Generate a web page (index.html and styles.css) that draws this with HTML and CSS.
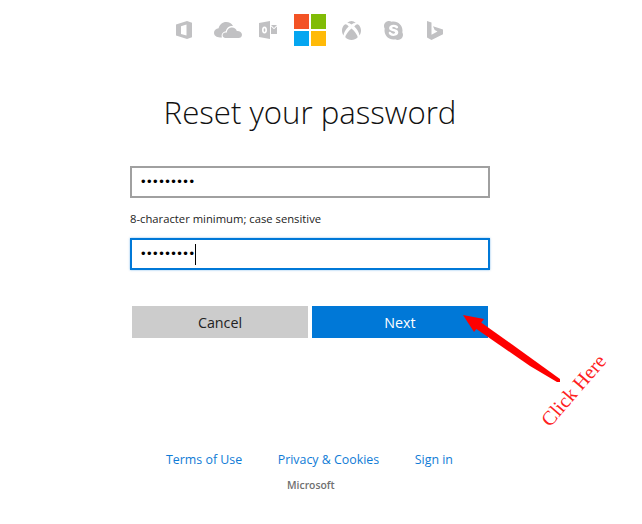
FILE: index.html
```html
<!DOCTYPE html>
<html lang="en">
<head>
  <meta charset="UTF-8">
  <title>Reset your password</title>
  <link rel="stylesheet" href="styles.css">
</head>
<body>

  <div class="brand-bar">
    <svg class="icon" width="16" height="18" viewBox="0 0 16 18"><path fill-rule="evenodd" d="M0 3.500 11 0l5 1.800v14.400L11 18 0 14.500zM5 5.200 10.500 3.600v10.800L5 13z"/></svg>
    <svg class="icon" width="28" height="16" viewBox="0 0 28 16"><path d="M6 15.500C2.500 15.500 0 13.500 0 10.800 0 8.300 2 6.500 4.600 6.300 5.400 2.600 8.500 0 12.200 0c3 0 5.500 1.600 6.800 4-1-.2-2-.1-3 .3-2.400.8-3.800 2.800-4.200 5-2.300.2-4.200 2.100-4.200 4.300 0 .7.100 1.300.4 1.900z"/><path d="M11 16c-1.500-.3-2.400-1.400-2.400-2.700 0-1.600 1.400-2.800 3-2.800h1.300c0-2.800 2.200-5 5.100-5 2.300 0 4.200 1.500 4.800 3.500 2.500-.3 5.200 1.200 5.200 3.700C28 14.700 26.500 16 24.500 16z"/></svg>
    <svg class="icon icon-outlook" width="18" height="18" viewBox="0 0 18 18"><path fill-rule="evenodd" d="M0 2 11 0v18L0 16zM5.500 5.500C3.800 5.500 3 7 3 9s.8 3.500 2.500 3.500S8 11 8 9 7.200 5.500 5.500 5.500zm0 1.700c.6 0 .8.800.8 1.800s-.2 1.800-.8 1.800-.8-.8-.8-1.800.2-1.800.8-1.800z"/><path d="M12 4h6l-3 3zM12 5.500l3 2.800 3-2.800V13h-6z"/></svg>
    <div class="ms-logo">
      <span class="tile tile-red"></span>
      <span class="tile tile-green"></span>
      <span class="tile tile-blue"></span>
      <span class="tile tile-yellow"></span>
    </div>
    <svg class="icon" width="19" height="19" viewBox="0 0 19 19"><path d="M9.500 3.400C8 2.400 6.500 1.900 5.200 2.100 6.600.8 8 0 9.500 0s2.900.8 4.300 2.100c-1.300-.2-2.800.3-4.300 1.300zM3.600 3.200C2.500 3.100 0 6 0 9.500c0 2 .6 3.700 1.600 5.100C1.500 12 4 8 6.700 5.500 5.500 4 4.400 3.300 3.600 3.200zM15.400 3.200c1.100-.1 3.600 2.800 3.600 6.300 0 2-.6 3.700-1.600 5.100.1-2.600-2.400-6.600-5.100-9.100 1.200-1.500 2.300-2.200 3.100-2.300zM9.500 7.600C6.500 10 3.500 14.300 3.300 16.300 5 18 7.100 19 9.500 19s4.500-1 6.200-2.700c-.2-2-3.200-6.300-6.200-8.700z"/></svg>
    <svg class="icon icon-skype" width="19" height="19" viewBox="0 0 19 19"><path fill-rule="evenodd" d="M5 0c1 0 1.900.3 2.700.8C8.300.6 8.900.5 9.500.5c5 0 9 4 9 9 0 .6-.1 1.200-.2 1.800.4.700.7 1.600.7 2.500 0 2.900-2.300 5.200-5.200 5.200-1 0-1.900-.3-2.700-.7-.5.100-1.100.2-1.600.2-5 0-9-4-9-9 0-.6.100-1.100.2-1.700C.3 7 0 6.100 0 5.100 0 2.300 2.200 0 5 0zm4.600 3.800c-2.700 0-4.500 1.300-4.500 3.200 0 3.800 6 2.700 6 4.500 0 .7-.7 1.200-1.700 1.200-2.200 0-2.100-1.900-3.500-1.900-.7 0-1.200.4-1.200 1.100 0 1.500 2 3 4.800 3 2.900 0 4.800-1.400 4.800-3.600 0-3.900-6.100-3-6.100-4.400 0-.6.600-1 1.500-1 1.900 0 1.900 1.500 3.200 1.500.7 0 1.200-.5 1.200-1.200 0-1.300-1.900-2.400-4.500-2.400z"/></svg>
    <svg class="icon icon-bing" width="16" height="19" viewBox="0 0 16 19"><path d="M0 0l4.500 1.500v12.200l6-3.300-2.800-1.300L6 5.200 16 8.500v4.700L4.500 19 0 16.500z"/></svg>
  </div>

  <div class="reset-form">
    <h1>Reset your password</h1>

    <div class="field">•••••••••</div>
    <div class="hint">8-character minimum; case sensitive</div>
    <div class="field field-focus">•••••••••<span class="caret"></span></div>

    <div class="buttons">
      <button class="btn btn-cancel">Cancel</button>
      <button class="btn btn-next">Next</button>
    </div>
  </div>

  <div class="footer-links">
    <a href="#">Terms of Use</a>
    <a href="#">Privacy &amp; Cookies</a>
    <a href="#">Sign in</a>
  </div>
  <div class="footer-brand">Microsoft</div>

  <!-- red annotation drawn on top of the page -->
  <svg class="arrow" width="110" height="90" viewBox="0 0 110 90">
    <path class="arrow-head" d="M1 4 22 8 12 21z"/>
    <path class="arrow-line" d="M17 10 55 37 98 68 98 71 95 71 68 55 13 17z"/>
  </svg>
  <div class="click-here">Click Here</div>

</body>
</html>
```

FILE: styles.css
```css
body {
  margin: 0;
  background: white;
  font-family: 'Open Sans', sans-serif;
  color: #222;
}
.brand-bar {
  display: flex;
  align-items: center;
  height: 32px;
  padding: 14px 0 0 176px;
  gap: 22px;
}
.icon {
  fill: #c1c1c3;
  flex: none;
}
.icon-outlook { margin-left: -5px; }
.icon-skype { margin-left: 1px; }
.icon-bing { margin-left: 2px; }
.ms-logo {
  display: grid;
  grid-template-columns: 15px 15px;
  grid-template-rows: 15px 15px;
  gap: 2px;
  margin: 0 -6px 0 -5px;
}
.tile-red { background: #f35325; }
.tile-green { background: #81bc06; }
.tile-blue { background: #05a6f0; }
.tile-yellow { background: #ffba08; }
.reset-form {
  width: 360px;
  margin-left: 130px;
}
h1 {
  margin: 44px 0 32px;
  font-weight: 300;
  font-size: 31.2px;
  line-height: 44px;
  text-align: center;
  color: #111;
}
.field {
  box-sizing: border-box;
  height: 32px;
  border: 2px solid #a0a0a0;
  padding-left: 9px;
  line-height: 28px;
  font-family: 'Liberation Sans', sans-serif;
  font-size: 13px;
  letter-spacing: 1.5px;
  color: black;
  display: flex;
  align-items: center;
}
.field-focus {
  border-color: #0078d7;
  box-shadow: 0 0 2px rgba(0,120,215,0.5);
}
.caret {
  width: 1px;
  height: 21px;
  background: black;
}
.hint {
  font-size: 11.25px;
  line-height: 16px;
  margin: 13px 0 11px;
}
.buttons {
  display: flex;
  gap: 4px;
  margin: 36px 2px 0;
}
.btn {
  flex: 1;
  height: 32px;
  border: none;
  font-family: 'Open Sans', sans-serif;
  font-size: 14.3px;
}
.btn-cancel {
  background: #cccccc;
  color: #222;
}
.btn-next {
  background: #0078d7;
  color: white;
}
.footer-links {
  display: flex;
  gap: 35.5px;
  margin: 113px 0 0 166px;
  font-size: 12.4px;
  line-height: 18px;
}
.footer-links a {
  color: #0f7bd6;
  text-decoration: none;
}
.footer-brand {
  margin: 8px 0 0 287px;
  font-size: 10.4px;
  font-weight: 600;
  line-height: 16px;
  color: #707070;
}
.arrow {
  position: absolute;
  left: 462px;
  top: 311px;
}
.arrow-head, .arrow-line {
  fill: #fe0000;
}
.click-here {
  position: absolute;
  left: 530px;
  top: 379px;
  font-family: 'Liberation Serif', serif;
  font-size: 20px;
  color: #fe2020;
  transform: rotate(-49deg);
}
```
